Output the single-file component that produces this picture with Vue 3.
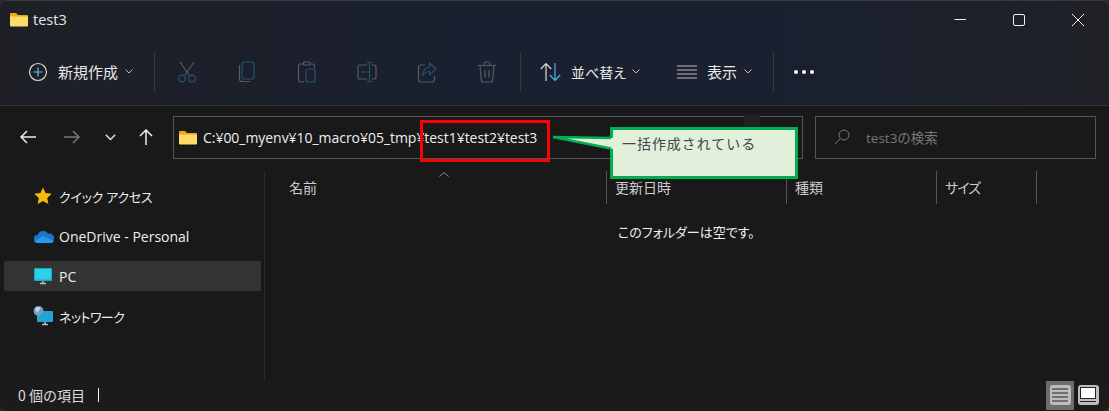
<script setup>
const disabled = [
  { id: 'cut', x: 0 }, { id: 'copy', x: 1 }, { id: 'paste', x: 2 }, { id: 'rename', x: 3 }, { id: 'share', x: 4 }, { id: 'trash', x: 5 },
]
const cols = [
  { name: '名前', w: 342 }, { name: '更新日時', w: 180 }, { name: '種類', w: 150 }, { name: 'サイズ', w: 100 },
]
</script>

<template>
  <div class="win">
    <header class="title">
      <svg class="folder" width="18" height="15" viewBox="0 0 18 15">
        <path d="M0 2a1 1 0 0 1 1-1h5l2 2h9a1 1 0 0 1 1 1v1H0z" fill="#e9a90f"/>
        <path d="M0 4.500h18V13.500a1 1 0 0 1-1 1H1a1 1 0 0 1-1-1z" fill="#fdd96a"/>
      </svg>
      <span class="title-text">test3</span>
      <div class="caps">
        <svg width="14" height="14" viewBox="0 0 14 14"><path d="M1.500 6.500h11.500" stroke="#eee" stroke-width="1" fill="none"/></svg>
        <svg width="14" height="14" viewBox="0 0 14 14"><rect x="1.500" y="1.500" width="11" height="11" rx="1.500" stroke="#eee" fill="none"/></svg>
        <svg width="14" height="14" viewBox="0 0 14 14"><path d="M1 1l12 12M13 1L1 13" stroke="#eee" fill="none"/></svg>
      </div>
    </header>

    <div class="toolbar">
      <button class="tool new">
        <svg width="20" height="20" viewBox="0 0 20 20"><circle cx="10" cy="10" r="8.500" stroke="#ddd" stroke-width="1.200" fill="none"/><path d="M10 5.500v9M5.500 10h9" stroke="#5cc0f2" stroke-width="1.200"/></svg>
        <span>新規作成</span>
        <svg class="chev" width="8" height="5" viewBox="0 0 8 5"><path d="M.5.500 4 4 7.500.500" stroke="#bbb" fill="none"/></svg>
      </button>
      <i class="sep"></i>
      <div class="group">
        <svg v-for="d in disabled" :key="d.id" width="20" height="22" viewBox="0 0 20 22">
          <g v-if="d.id === 'cut'" fill="none" stroke-width="1.200">
            <path d="M3 1l9 13M17 1L8 14" stroke="#555a63"/>
            <circle cx="5" cy="17.500" r="3.300" stroke="#27506f"/><circle cx="15" cy="17.500" r="3.300" stroke="#27506f"/>
          </g>
          <g v-if="d.id === 'copy'" fill="none" stroke-width="1.200">
            <path d="M2.500 4v14a2.500 2.500 0 0 0 2.500 2.500h8" stroke="#555a63"/>
            <rect x="5" y="1" width="12" height="17" rx="2.500" stroke="#27506f"/>
          </g>
          <g v-if="d.id === 'paste'" fill="none" stroke-width="1.200">
            <path d="M7 3H3.500A1.800 1.800 0 0 0 1.500 5v14a1.800 1.800 0 0 0 2 1.800H7M13 3h2.500a1.800 1.800 0 0 1 2 2v2" stroke="#555a63"/>
            <rect x="6.500" y="1" width="6.500" height="3" rx="1" stroke="#555a63"/>
            <rect x="9" y="8" width="9" height="13" rx="2" stroke="#27506f"/>
          </g>
          <g v-if="d.id === 'rename'" fill="none" stroke-width="1.200">
            <path d="M10 4H3a2 2 0 0 0-2 2v10a2 2 0 0 0 2 2h7M15 4h2a2 2 0 0 1 2 2v10a2 2 0 0 1-2 2h-2" stroke="#555a63"/>
            <path d="M4 11h8M12.500 1.500v19M10 1.500h5M10 20.500h5" stroke="#27506f"/>
          </g>
          <g v-if="d.id === 'share'" fill="none" stroke-width="1.200">
            <path d="M8 4H4a2.500 2.500 0 0 0-2.500 2.500v12A2.500 2.500 0 0 0 4 21h11a2.500 2.500 0 0 0 2.500-2.500V15" stroke="#555a63"/>
            <path d="M12.500 2l6.500 6-6.500 6v-3.500C9 10.500 7 12 5.500 15c.5-5 3-8.500 7-9z" stroke="#27506f"/>
          </g>
          <g v-if="d.id === 'trash'" fill="none" stroke="#555a63" stroke-width="1.200">
            <path d="M1 4.500h18M7 4.500V3a2 2 0 0 1 2-2h2a2 2 0 0 1 2 2v1.500"/>
            <path d="M3 4.500l1.300 14.500a2 2 0 0 0 2 2h7.400a2 2 0 0 0 2-2L17 4.500"/>
            <path d="M8 9v7.500M12 9v7.500"/>
          </g>
        </svg>
      </div>
      <i class="sep sep2"></i>
      <button class="tool sort">
        <svg width="21" height="20" viewBox="0 0 21 20"><path d="M6 19V2M.800 7 6 1.500 11.200 7" stroke="#ddd" stroke-width="1.200" fill="none"/><path d="M15 1v17M9.800 13l5.200 5.500 5.200-5.500" stroke="#4cb4f0" stroke-width="1.200" fill="none"/></svg>
        <span>並べ替え</span>
        <svg class="chev" width="8" height="5" viewBox="0 0 8 5"><path d="M.5.500 4 4 7.500.500" stroke="#bbb" fill="none"/></svg>
      </button>
      <button class="tool view">
        <svg width="20" height="16" viewBox="0 0 20 16"><path d="M0 2h20M0 6h20M0 10h20M0 14h20" stroke="#bbb" stroke-width="1.200"/></svg>
        <span>表示</span>
        <svg class="chev" width="8" height="5" viewBox="0 0 8 5"><path d="M.5.500 4 4 7.500.500" stroke="#bbb" fill="none"/></svg>
      </button>
      <i class="sep sep3"></i>
      <div class="more"><b></b><b></b><b></b></div>
    </div>

    <div class="nav">
      <div class="arrows">
        <svg width="16" height="14" viewBox="0 0 16 14"><path d="M16 7H1M7 1 1 7l6 6" stroke="#eee" stroke-width="1.500" fill="none"/></svg>
        <svg width="16" height="14" viewBox="0 0 16 14"><path d="M0 7h15M9 1l6 6-6 6" stroke="#777" stroke-width="1.500" fill="none"/></svg>
        <svg width="11" height="7" viewBox="0 0 11 7"><path d="M.8.800 5.500 5.500 10.200.800" stroke="#ddd" stroke-width="1.500" fill="none"/></svg>
        <svg width="14" height="16" viewBox="0 0 14 16"><path d="M7 16V1M1 7l6-6 6 6" stroke="#eee" stroke-width="1.500" fill="none"/></svg>
      </div>
      <div class="addr">
        <svg width="18" height="15" viewBox="0 0 18 15">
          <path d="M0 2a1 1 0 0 1 1-1h5l2 2h9a1 1 0 0 1 1 1v1H0z" fill="#e9a90f"/>
          <path d="M0 4.500h18V13.500a1 1 0 0 1-1 1H1a1 1 0 0 1-1-1z" fill="#fdd96a"/>
        </svg>
        <span class="path">C:¥00_myenv¥10_macro¥05_tmp¥test1¥test2¥test3</span>
        <i class="addr-notch"></i>
      </div>
      <div class="search">
        <svg width="16" height="16" viewBox="0 0 16 16"><circle cx="10" cy="6" r="5" stroke="#777" fill="none"/><path d="M6.500 9.500 1 15" stroke="#777" fill="none"/></svg>
        <span>test3の検索</span>
      </div>
    </div>

    <div class="body">
      <aside class="side">
        <div class="row quick">
          <svg width="18" height="18" viewBox="0 0 18 18"><path d="M9 .5l2.600 5.600 6.100.7-4.500 4.200 1.200 6L9 14l-5.400 3 1.200-6L.3 6.800l6.100-.7z" fill="#f9b90a"/></svg>
          <span>クイック アクセス</span>
        </div>
        <div class="row drive">
          <svg width="20" height="14" viewBox="0 0 20 14"><path d="M4 14a4 4 0 0 1-.5-8A6 6 0 0 1 14 4.500 4.800 4.800 0 0 1 20 9.500 4.500 4.500 0 0 1 16 14z" fill="#1b76d2"/><path d="M4 14a3.500 3.500 0 0 1-3-1.700L9 7l11 5A4 4 0 0 1 16 14z" fill="#2a9ae8"/></svg>
          <span>OneDrive - Personal</span>
        </div>
        <div class="row active">
          <svg width="18" height="17" viewBox="0 0 18 17"><rect width="18" height="13" rx="1" fill="#1aa8c8"/><rect x="1" y="1" width="16" height="10.500" fill="#2ed0e8"/><path d="M6 15.500h6M9 13v2" stroke="#bbb" stroke-width="1.500"/></svg>
          <span>PC</span>
        </div>
        <div class="row net">
          <svg width="20" height="20" viewBox="0 0 20 20"><rect x="4" y="5" width="16" height="11" rx="1" fill="#1fa6d6"/><path d="M9 18.500h6M12 16v2.500" stroke="#bbb" stroke-width="1.500"/><circle cx="5.500" cy="5" r="5" fill="#6f9cc4"/><path d="M2 3a4 4 0 0 1 6-1L4 7z" fill="#bcd6ea"/></svg>
          <span>ネットワーク</span>
        </div>
      </aside>
      <main class="list">
        <div class="heads">
          <div v-for="c in cols" :key="c.name" class="head" :style="{ width: c.w + 'px' }">{{ c.name }}</div>
          <svg class="sortmark" width="10" height="5" viewBox="0 0 10 5"><path d="M.5 4.500 5 .5l4.500 4" stroke="#888" fill="none"/></svg>
        </div>
        <p class="empty">このフォルダーは空です。</p>
      </main>
    </div>

    <footer class="status">
      <span>0 個の項目</span>
      <i class="bar"></i>
      <div class="views">
        <div class="vbtn on">
          <div class="face"><svg width="16" height="16" viewBox="0 0 16 16"><path d="M0 2h16M0 6h16M0 10h16M0 14h16" stroke="#222" stroke-width="1.200"/></svg></div>
        </div>
        <div class="vbtn">
          <div class="face"><svg width="16" height="16" viewBox="0 0 16 16"><rect x=".5" y=".5" width="15" height="11" fill="#fff" stroke="#222"/><path d="M0 14.500h16" stroke="#222"/></svg></div>
        </div>
      </div>
    </footer>

    <div class="redbox"></div>
    <div class="callout">一括作成されている</div>
    <svg class="tail" width="64" height="20" viewBox="0 0 64 20"><path d="M1 4 62 5V16z" fill="#e2efda"/><path d="M1 4 59 5M1 4 59 15.500" stroke="#00b050" stroke-width="2.500" fill="none"/></svg>
  </div>
</template>

<style>
html, body { margin: 0; background: #2b2b2b; overflow: hidden; }
</style>

<style scoped>
.win {
  position: relative; width: 1109px; height: 411px; box-sizing: border-box;
  display: flex; flex-direction: column; overflow: hidden;
  background: #191919; border-radius: 8px; border-top: 1px solid #3a3a3a;
  font-family: "Noto Sans CJK JP", "Noto Sans", sans-serif; color: #eee; font-size: 14px;
  font-feature-settings: "palt";
}
.title, .toolbar { background: linear-gradient(90deg, #1e2026 0%, #1a2030 45%, #1a2030 70%, #1f2126 100%); }
.title { height: 37px; display: flex; align-items: center; padding-left: 10px; flex: none; }
.title-text { margin-left: 5px; font: 14.500px "Open Sans", sans-serif; color: #e6e6e6; }
.caps { margin-left: auto; display: flex; gap: 45px; padding-right: 24px; }
.folder { flex: none; }
.toolbar { height: 68px; display: flex; align-items: center; padding: 0 0 0 28px; box-sizing: border-box; flex: none; border-bottom: 1px solid #333; }
.tool { background: none; border: 0; padding: 0; display: flex; align-items: center; color: #e8e8e8; font: 15px "Noto Sans CJK JP", sans-serif; }
.new span { margin-left: 10px; }
.chev { margin-left: 7px; }
.sep { width: 1px; height: 40px; background: #34383f; flex: none; margin-left: 21px; }
.group { display: flex; gap: 40px; margin-left: 22px; }
.sep2 { margin-left: 23px; }
.sort { margin-left: 19px; }
.sort span { margin-left: 10px; width: 54px; white-space: nowrap; font-size: 14px; font-feature-settings: "palt"; }
.view { margin-left: 37px; }
.view span { margin-left: 10px; }
.sep3 { margin-left: 21px; }
.more { display: flex; gap: 4px; margin-left: 20px; }
.more b { width: 4px; height: 4px; border-radius: 50%; background: #fff; }
.nav { height: 65px; display: flex; align-items: center; flex: none; padding-bottom: 3px; box-sizing: border-box; }
.arrows { width: 173px; flex: none; display: flex; align-items: center; padding-left: 20px; box-sizing: border-box; }
.arrows svg:nth-child(2) { margin-left: 28px; }
.arrows svg:nth-child(3) { margin-left: 25px; }
.arrows svg:nth-child(4) { margin-left: 23px; }
.addr {
  position: relative; width: 630px; height: 43px; box-sizing: border-box; flex: none;
  border: 1.500px solid #555; display: flex; align-items: center; padding-left: 5px;
}
.path { margin-left: 6px; font: 14px "Open Sans", "Noto Sans CJK JP", sans-serif; letter-spacing: -.04px; color: #eee; white-space: nowrap; }
.addr-notch { position: absolute; left: 570px; top: -2px; width: 16px; height: 32px; background: #222; }
.search {
  width: 281px; height: 43px; box-sizing: border-box; margin-left: 12px; flex: none;
  border: 1.500px solid #555; display: flex; align-items: center; padding-left: 18px;
  color: #777; font: 13.500px "Open Sans", "Noto Sans CJK JP", sans-serif;
}
.search span { margin-left: 16px; }
.body { flex: 1; display: flex; min-height: 0; }
.side { width: 260px; flex: none; border-right: 1px solid #2b2b2b; padding: 10px 0 0 4px; }
.row { height: 30px; width: 257px; display: flex; align-items: center; padding-left: 30px; box-sizing: border-box; margin-bottom: 10px; border-radius: 2px; }
.row span { margin-left: 7px; font: 14px "Open Sans", "Noto Sans CJK JP", sans-serif; color: #eee; white-space: nowrap; }
.row.quick span { font-size: 13px; font-feature-settings: "palt"; letter-spacing: -.25px; }
.row.drive span { margin-left: 5px; }
.row.active { background: #333; }
.row.active span { margin-left: 7px; }
.row.net { padding-left: 29px; }
.row.net span { margin-left: 6px; font-size: 13px; font-feature-settings: "palt"; letter-spacing: -.6px; }
.list { flex: 1; min-width: 0; }
.heads { position: relative; display: flex; height: 33px; }
.head { box-sizing: border-box; padding: 6px 0 0 8px; height: 33px; border-right: 1px solid #555; color: #ccc; font-size: 14px; flex: none; line-height: 20px; white-space: nowrap; }
.head:first-child { padding-left: 24px; }
.head:last-of-type { letter-spacing: -1px; }
.sortmark { position: absolute; left: 174px; top: 1px; }
.empty { margin: 18px 0 0 353px; font-size: 13px; color: #eee; }
.status { height: 30px; flex: none; display: flex; align-items: center; padding: 0 0 2px 18px; box-sizing: border-box; background: #1b1b1b; font: 14px "Noto Sans CJK JP", sans-serif; color: #ddd; }
.bar { width: 1px; height: 14px; background: #eee; margin-left: 13px; }
.views { margin-left: auto; display: flex; height: 100%; align-items: center; padding-right: 7px; }
.vbtn { width: 28px; height: 29px; display: flex; align-items: center; justify-content: center; box-sizing: border-box; }
.vbtn.on { background: #6e6e6e; }
.face { width: 21px; height: 20px; background: #bdbdbd; border-radius: 3px; display: flex; align-items: center; justify-content: center; }
.redbox { position: absolute; left: 420px; top: 119px; width: 130px; height: 42px; box-sizing: border-box; border: 3px solid #f00; }
.tail { position: absolute; left: 552px; top: 132px; }
.callout {
  position: absolute; left: 610px; top: 126px; width: 188px; height: 52px; box-sizing: border-box;
  border: 3px solid #00b050; background: #e2efda; color: #444;
  font: 14px "Noto Sans CJK JP", sans-serif; padding: 3px 0 0 9px; letter-spacing: .95px;
}
</style>
